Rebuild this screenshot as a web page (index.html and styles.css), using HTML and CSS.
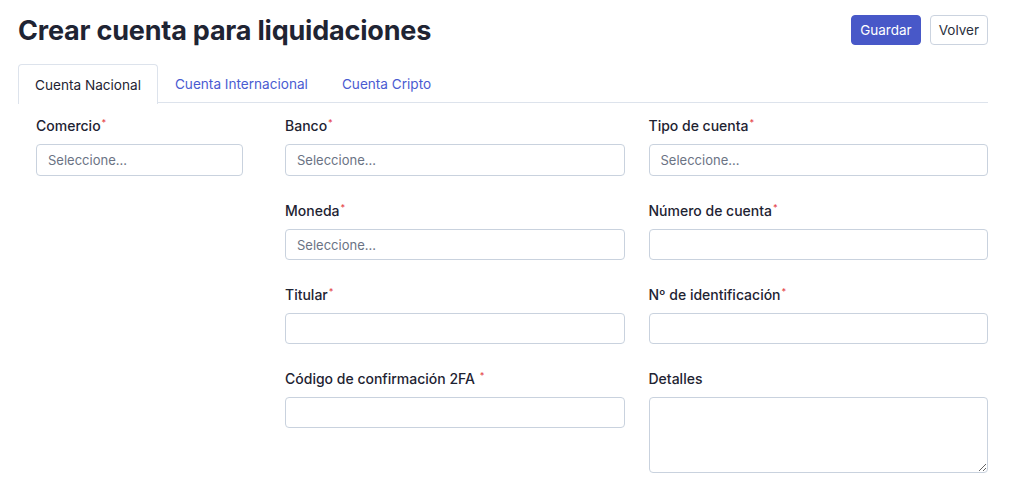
FILE: index.html
```html
<!DOCTYPE html>
<html lang="es">
<head>
<meta charset="utf-8">
<title>Crear cuenta para liquidaciones</title>
<link rel="stylesheet" href="styles.css">
</head>
<body>
<div class="page">
  <header class="header">
    <h1 class="title">Crear cuenta para liquidaciones</h1>
    <div class="actions">
      <button class="btn btn-primary">Guardar</button>
      <button class="btn btn-outline">Volver</button>
    </div>
  </header>
  <nav class="tabs">
    <a class="tab active">Cuenta Nacional</a>
    <a class="tab">Cuenta Internacional</a>
    <a class="tab">Cuenta Cripto</a>
  </nav>
  <div class="form">
    <div class="col-left">
      <div class="field">
        <label class="label">Comercio<span class="req">*</span></label>
        <div class="input first placeholder">Seleccione...</div>
      </div>
    </div>
    <div class="col-main">
      <div class="field">
        <label class="label">Banco<span class="req">*</span></label>
        <div class="input first placeholder">Seleccione...</div>
      </div>
      <div class="field">
        <label class="label">Tipo de cuenta<span class="req">*</span></label>
        <div class="input first placeholder">Seleccione...</div>
      </div>
      <div class="field">
        <label class="label">Moneda<span class="req">*</span></label>
        <div class="input placeholder">Seleccione...</div>
      </div>
      <div class="field">
        <label class="label">Número de cuenta<span class="req">*</span></label>
        <div class="input"></div>
      </div>
      <div class="field">
        <label class="label">Titular<span class="req">*</span></label>
        <div class="input"></div>
      </div>
      <div class="field">
        <label class="label">Nº de identificación<span class="req">*</span></label>
        <div class="input"></div>
      </div>
      <div class="field">
        <label class="label">Código de confirmación 2FA <span class="req">*</span></label>
        <div class="input"></div>
      </div>
      <div class="field">
        <label class="label">Detalles</label>
        <textarea class="textarea"></textarea>
      </div>
    </div>
  </div>
</div>
</body>
</html>
```

FILE: styles.css
```css
* { box-sizing: border-box; }
html, body { margin: 0; padding: 0; background: #ffffff; }
body {
  font-family: Inter, "Noto Sans", sans-serif;
  color: #1e2332;
}
.page {
  padding: 0 22px 0 18px;
}
.header {
  display: flex;
  justify-content: space-between;
  align-items: flex-start;
  padding-top: 15px;
  height: 64px;
}
.title {
  margin: 0;
  font-size: 27px;
  font-weight: 700;
  line-height: 32px;
  letter-spacing: -0.2px;
  color: #1f2433;
}
.actions {
  display: flex;
  gap: 9px;
}
.btn {
  font-family: inherit;
  font-size: 13.5px;
  height: 30px;
  padding: 0 8px;
  border-radius: 4px;
  cursor: pointer;
}
.btn-primary {
  background: #4858c8;
  color: #ffffff;
  border: 1px solid #4858c8;
  font-weight: 400;
}
.btn-outline {
  background: #ffffff;
  color: #2a2f3d;
  border: 1px solid #cbd3df;
}
.tabs {
  display: flex;
  border-bottom: 1px solid #dde3ec;
  height: 39px;
}
.tab {
  display: flex;
  align-items: center;
  padding: 0 16px;
  font-size: 13.6px;
  color: #4a5bd1;
  border: 1px solid transparent;
  border-bottom: none;
  border-top-left-radius: 4px;
  border-top-right-radius: 4px;
  height: 39px;
}
.tab.active {
  color: #1e2332;
  border-color: #dde3ec;
  background: #ffffff;
  height: 40px;
  margin-bottom: -1px;
}
.form {
  display: grid;
  grid-template-columns: 242.5px 1fr;
  padding-top: 13px;
}
.col-left {
  padding: 0 18px;
}
.col-main {
  display: grid;
  grid-template-columns: 1fr 1fr;
  column-gap: 24px;
  padding-left: 24.5px;
}
.field {
  display: flex;
  flex-direction: column;
  margin-bottom: 25px;
}
.label {
  font-size: 14px;
  font-weight: 500;
  line-height: 20px;
  margin-bottom: 8px;
  color: #1e2332;
}
.req {
  color: #e5484d;
  font-size: 9px;
  vertical-align: top;
  position: relative;
  top: -3px;
  margin-left: 1px;
}
.input {
  height: 31px;
  border: 1px solid #c9d2de;
  border-radius: 4px;
  padding: 0 11px;
  display: flex;
  align-items: center;
  font-size: 13px;
}
.input.first { height: 32px; }
.placeholder { color: #6b7384; }
.textarea {
  display: block;
  height: 76px;
  border: 1px solid #c9d2de;
  border-radius: 4px;
  resize: vertical;
  font-family: inherit;
  width: 100%;
  margin: 0;
}
```
